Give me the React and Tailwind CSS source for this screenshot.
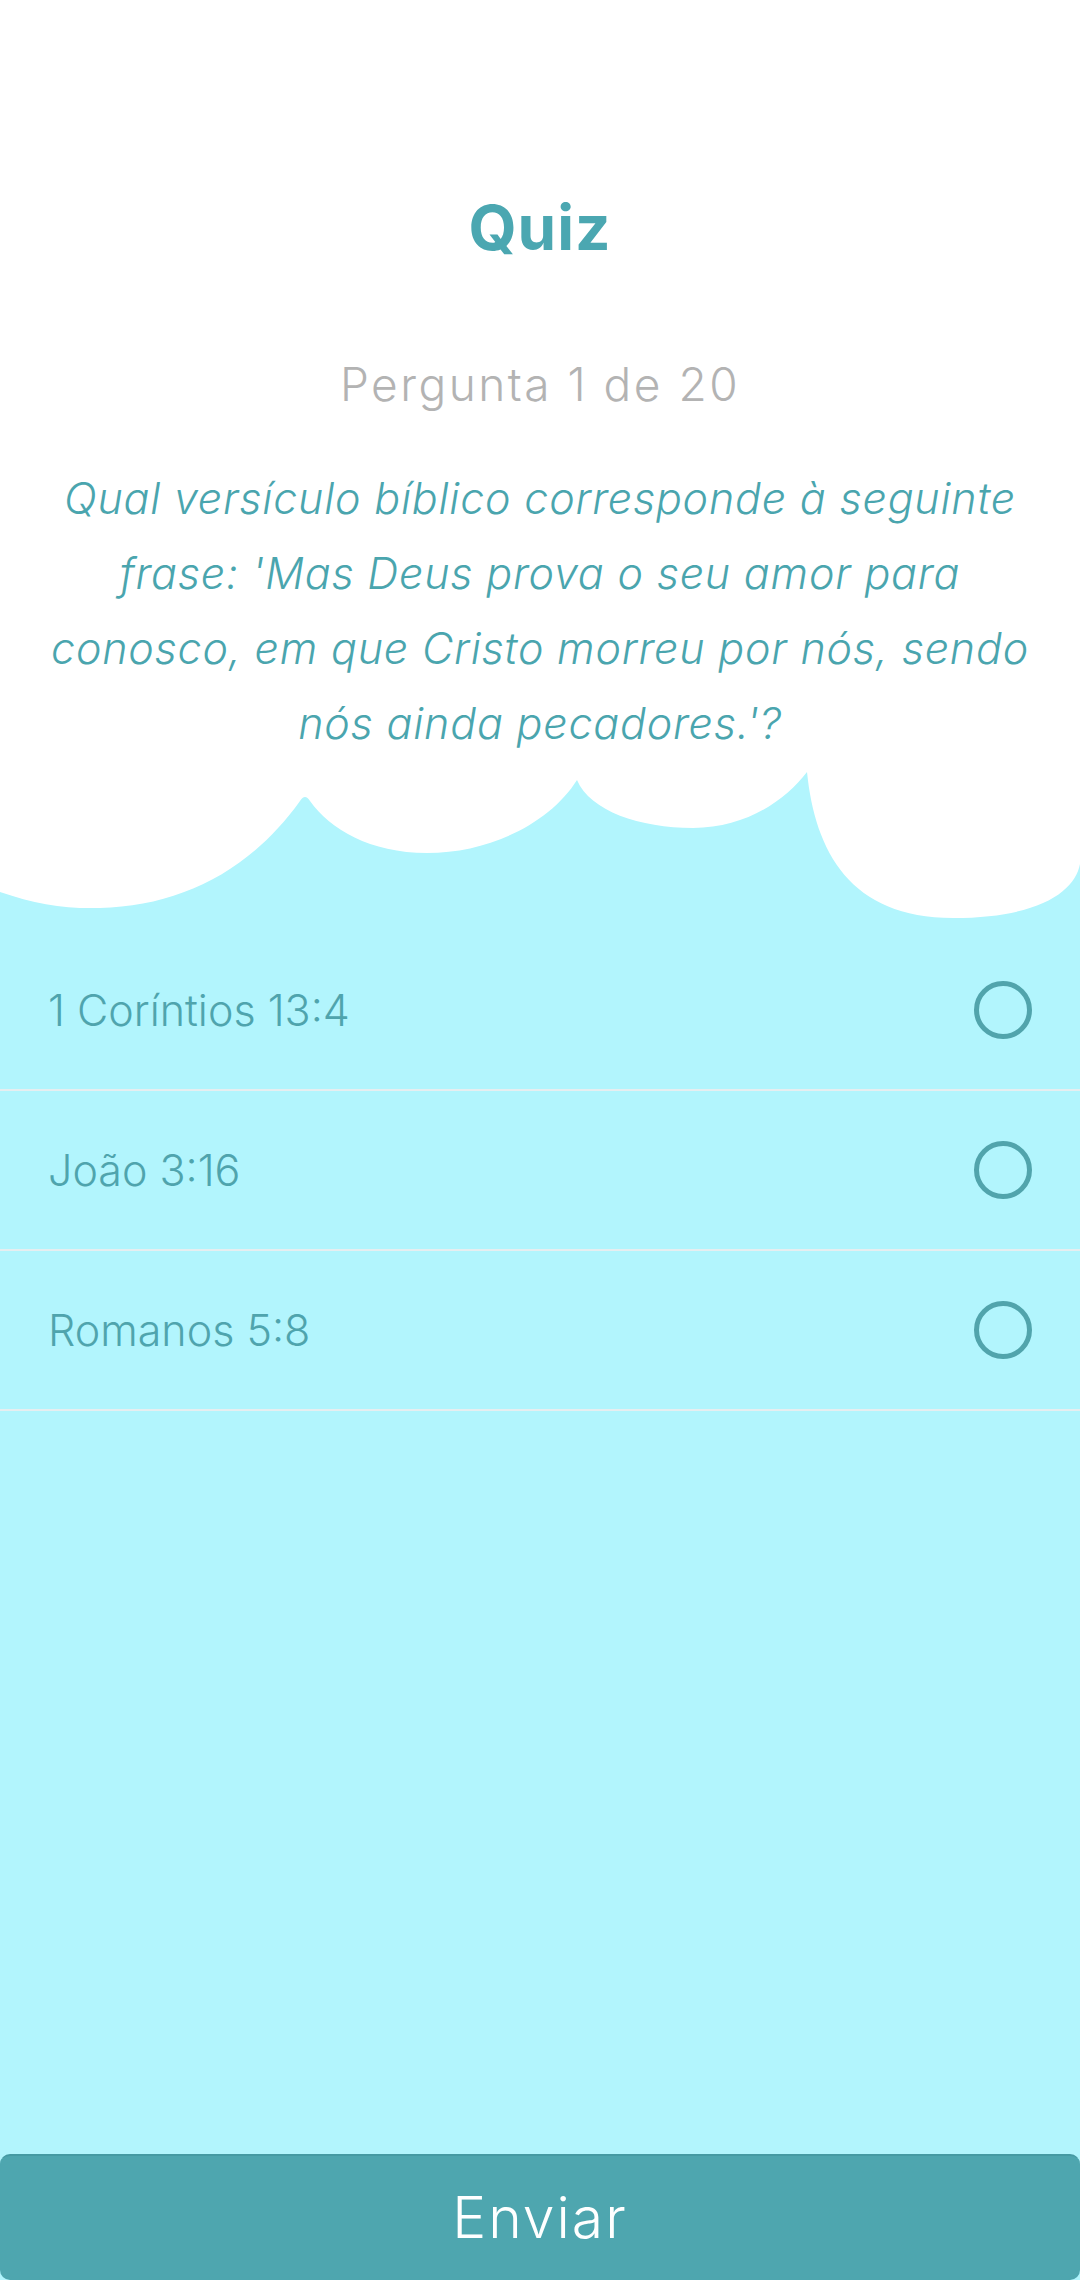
import { useState } from "react";

const options = ["1 Coríntios 13:4", "João 3:16", "Romanos 5:8"];

const Wave = () => (
  <svg
    className="block w-full h-[170px]"
    viewBox="0 0 1080 170"
    preserveAspectRatio="none"
  >
    <path
      fill="#b2f5fd"
      d="M0 131 C35 143 65 148 100 147 C180 145 250 110 300 40 Q305 32 310 40 C330 68 370 92 427 92 C490 92 550 62 577 19 C590 50 640 67 693 67 C745 67 785 40 807 11 C815 90 850 157 953 157 C1040 157 1075 130 1080 103 L1080 170 L0 170 Z"
    />
  </svg>
);

const App = () => {
  const [selected, setSelected] = useState(null);

  return (
    <div className="min-h-screen flex flex-col bg-white font-['Inter',sans-serif]">
      {/* header */}
      <div className="flex flex-col items-center text-center">
        <h1 className="pt-[192px] text-[62px] leading-[72px] font-bold text-[#4ba7b1] tracking-[1px]">
          Quiz
        </h1>
        <p className="mt-[90px] text-[46px] leading-[60px] font-light text-[#b3b3b3] tracking-[2.5px]">
          Pergunta 1 de 20
        </p>
        <p className="mt-[47px] text-[43px] leading-[75px] font-light italic text-[#4aa5ae] tracking-[0.8px] whitespace-nowrap">
          Qual versículo bíblico corresponde à seguinte
          <br />
          frase: 'Mas Deus prova o seu amor para
          <br />
          conosco, em que Cristo morreu por nós, sendo
          <br />
          nós ainda pecadores.'?
        </p>
      </div>

      <Wave />

      {/* options */}
      <div className="flex-1 flex flex-col bg-[#b2f5fd]">
        {options.map((opt, i) => (
          <button
            key={opt}
            onClick={() => setSelected(i)}
            className="h-[160px] flex items-center justify-between px-12 border-b-2 border-[#e6eef0] text-left"
          >
            <span className="text-[43px] font-light text-[#4fa4ad]">{opt}</span>
            <span className="w-[58px] h-[58px] rounded-full border-[5px] border-[#51a4ac] flex items-center justify-center">
              {selected === i && (
                <span className="w-[30px] h-[30px] rounded-full bg-[#51a4ac]" />
              )}
            </span>
          </button>
        ))}

        <button className="mt-auto h-[126px] w-full rounded-[10px] bg-[#4ea6af] border-t-2 border-[#459aa3] text-white text-[57px] font-light tracking-[2px]">
          Enviar
        </button>
      </div>
    </div>
  );
};

export default App;
